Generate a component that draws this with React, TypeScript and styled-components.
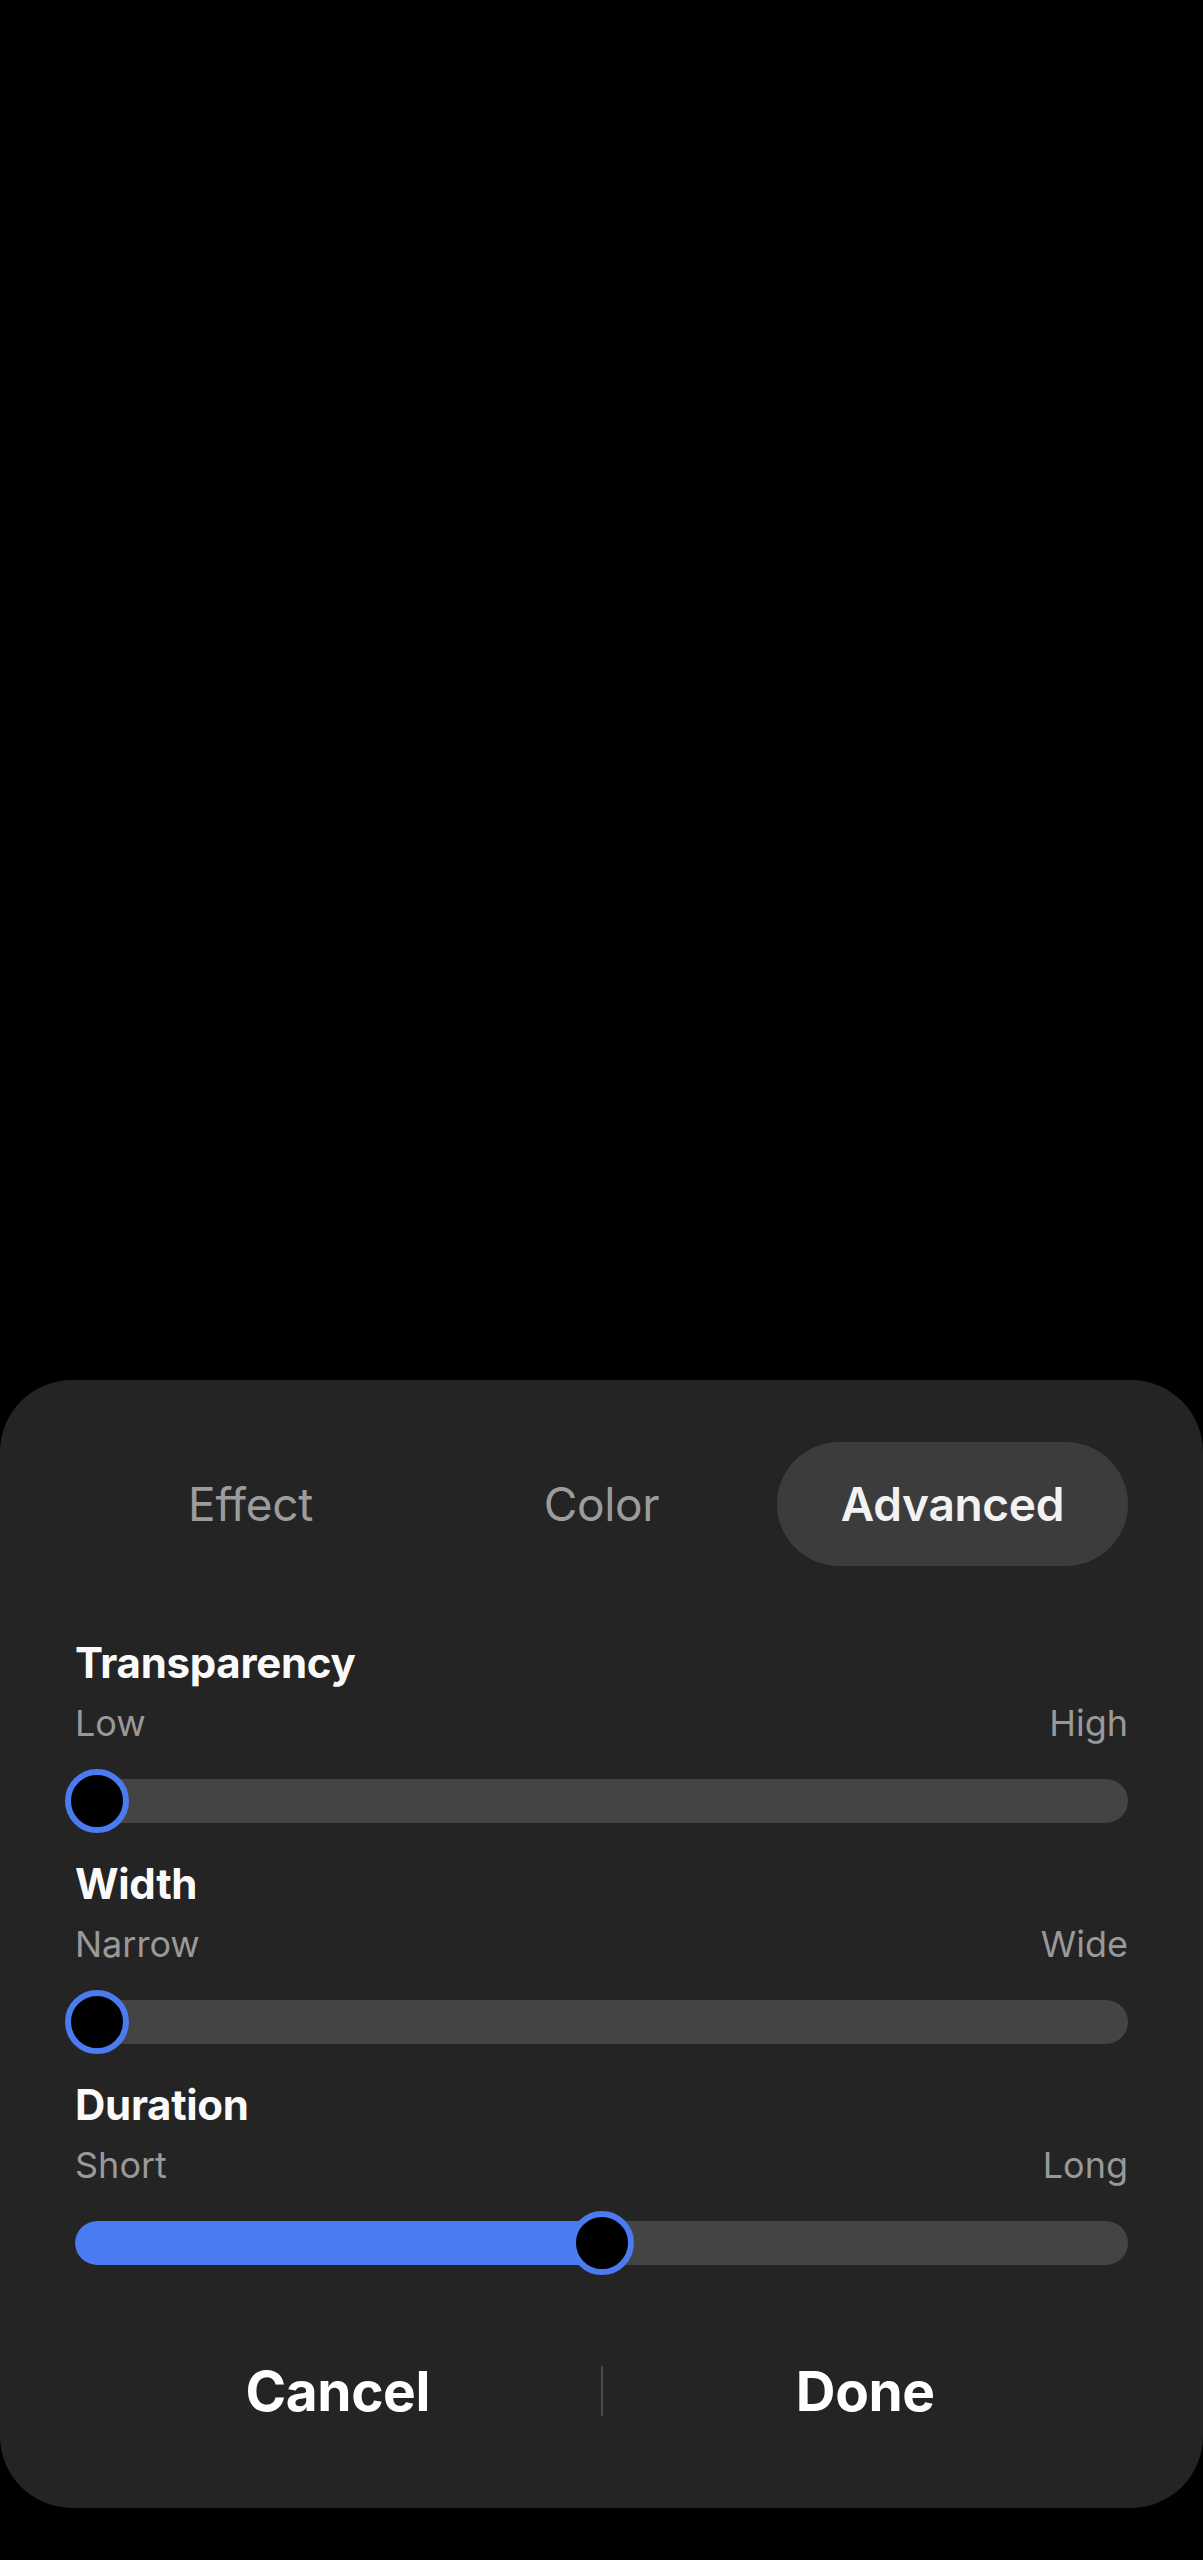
import * as React from 'react'
import styled, { createGlobalStyle } from 'styled-components'

const PAD = 75
const THUMB = 64
const TRACK = 44
const BLUE = '#4b7bf0'

const GlobalStyle = createGlobalStyle`
  html, body {
    margin: 0;
    padding: 0;
    background: #000;
  }
  body {
    font-family: Inter, Roboto, 'Noto Sans', sans-serif;
  }
`

const Screen = styled.div`
  height: 2560px;
  display: flex;
  flex-direction: column;
  justify-content: flex-end;
  padding-bottom: 52px;
  box-sizing: border-box;
  background: #000;
`

const Sheet = styled.div`
  background: #242424;
  border-radius: 72px;
  padding: 62px ${PAD}px 62px;
  display: flex;
  flex-direction: column;
`

const Tabs = styled.div`
  display: grid;
  grid-template-columns: repeat(3, 1fr);
  height: 124px;
  margin-bottom: 72px;
`

const Tab = styled.div<{ $active?: boolean }>`
  display: flex;
  align-items: center;
  justify-content: center;
  border-radius: 62px;
  font-size: 46px;
  letter-spacing: -0.3px;
  font-weight: ${props => (props.$active ? 600 : 400)};
  color: ${props => (props.$active ? '#f2f2f2' : '#9c9c9c')};
  background: ${props => (props.$active ? '#3c3c3c' : 'transparent')};
`

const Section = styled.div`
  display: flex;
  flex-direction: column;

  & + & {
    margin-top: 26px;
  }
`

const Title = styled.div`
  font-size: 42px;
  line-height: 50px;
  font-weight: 700;
  color: #fafafa;
  letter-spacing: -0.3px;
  margin-bottom: 14px;
`

const Range = styled.div`
  display: flex;
  justify-content: space-between;
  font-size: 36px;
  line-height: 42px;
  color: #999;
  margin-bottom: 25px;
`

const Slider = styled.div`
  position: relative;
  height: ${THUMB}px;
  display: flex;
  align-items: center;
`

const Track = styled.div`
  position: relative;
  flex: 1;
  height: ${TRACK}px;
  border-radius: ${TRACK / 2}px;
  background: #444;
  overflow: hidden;
`

const Fill = styled.div`
  height: 100%;
  background: ${BLUE};
  border-radius: ${TRACK / 2}px 0 0 ${TRACK / 2}px;
`

const Thumb = styled.div`
  position: absolute;
  top: 0;
  width: ${THUMB}px;
  height: ${THUMB}px;
  box-sizing: border-box;
  border-radius: 50%;
  border: 6px solid ${BLUE};
  background: #000;
  transform: translateX(-50%);
`

const Actions = styled.div`
  display: grid;
  grid-template-columns: 1fr 2px 1fr;
  align-items: center;
  height: 110px;
  margin-top: 61px;
`

const Action = styled.div`
  text-align: center;
  font-size: 55px;
  font-weight: 700;
  color: #fff;
  letter-spacing: -0.4px;
`

const Divider = styled.div`
  height: 50px;
  background: #4a4a4a;
`

type SettingProps = {
  title: string
  low: string
  high: string
  value: number
}

const Setting = ({ title, low, high, value }: SettingProps) => {
  // thumb travels between the rounded ends of the track
  const pos = `calc(${TRACK / 2}px + (100% - ${TRACK}px) * ${value})`
  return (
    <Section>
      <Title>{title}</Title>
      <Range>
        <span>{low}</span>
        <span>{high}</span>
      </Range>
      <Slider>
        <Track>
          <Fill style={{ width: value > 0 ? pos : 0 }} />
        </Track>
        <Thumb style={{ left: pos }} />
      </Slider>
    </Section>
  )
}

const App = () => (
  <Screen>
    <GlobalStyle />
    <Sheet>
      <Tabs>
        <Tab>Effect</Tab>
        <Tab>Color</Tab>
        <Tab $active>Advanced</Tab>
      </Tabs>
      <Setting title="Transparency" low="Low" high="High" value={0} />
      <Setting title="Width" low="Narrow" high="Wide" value={0} />
      <Setting title="Duration" low="Short" high="Long" value={0.5} />
      <Actions>
        <Action>Cancel</Action>
        <Divider />
        <Action>Done</Action>
      </Actions>
    </Sheet>
  </Screen>
)

export default App
